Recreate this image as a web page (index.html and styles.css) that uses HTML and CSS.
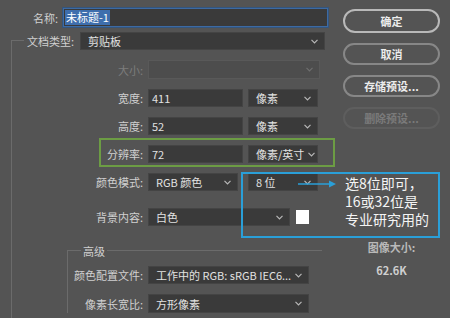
FILE: index.html
```html
<!DOCTYPE html>
<html lang="zh-CN">
<head>
    <meta charset="UTF-8">
    <meta name="viewport" content="width=device-width, initial-scale=1.0">
    <title>新建文档</title>
    <link rel="stylesheet" href="styles.css">
</head>
<body>
    <div class="dialog">
        <!-- left: form -->
        <div class="form">
            <div class="row row-name">
                <span class="lbl">名称:</span>
                <div class="field name-field"><span class="picked">未标题-1</span></div>
            </div>
            <div class="row row-type">
                <span class="lbl">文档类型:</span>
                <div class="select type-select">
                    <span>剪贴板</span>
                    <svg class="chev" width="7" height="5" viewBox="0 0 7 5"><polyline points="0.5,0.8 3.5,3.8 6.5,0.8"/></svg>
                </div>
            </div>

            <div class="frame">
                <div class="row row-size dim">
                    <span class="lbl">大小:</span>
                    <div class="select size-select">
                        <span></span>
                        <svg class="chev" width="7" height="5" viewBox="0 0 7 5"><polyline points="0.5,0.8 3.5,3.8 6.5,0.8"/></svg>
                    </div>
                </div>
                <div class="row">
                    <span class="lbl">宽度:</span>
                    <div class="field num-field">411</div>
                    <div class="select unit-select">
                        <span>像素</span>
                        <svg class="chev" width="7" height="5" viewBox="0 0 7 5"><polyline points="0.5,0.8 3.5,3.8 6.5,0.8"/></svg>
                    </div>
                </div>
                <div class="row">
                    <span class="lbl">高度:</span>
                    <div class="field num-field">52</div>
                    <div class="select unit-select">
                        <span>像素</span>
                        <svg class="chev" width="7" height="5" viewBox="0 0 7 5"><polyline points="0.5,0.8 3.5,3.8 6.5,0.8"/></svg>
                    </div>
                </div>
                <div class="row">
                    <span class="lbl">分辨率:</span>
                    <div class="field num-field">72</div>
                    <div class="select unit-select">
                        <span>像素/英寸</span>
                        <svg class="chev" width="7" height="5" viewBox="0 0 7 5"><polyline points="0.5,0.8 3.5,3.8 6.5,0.8"/></svg>
                    </div>
                </div>
                <div class="row">
                    <span class="lbl">颜色模式:</span>
                    <div class="select mode-select">
                        <span>RGB 颜色</span>
                        <svg class="chev" width="7" height="5" viewBox="0 0 7 5"><polyline points="0.5,0.8 3.5,3.8 6.5,0.8"/></svg>
                    </div>
                    <div class="select bit-select">
                        <span>8 位</span>
                        <svg class="chev" width="7" height="5" viewBox="0 0 7 5"><polyline points="0.5,0.8 3.5,3.8 6.5,0.8"/></svg>
                    </div>
                </div>
                <div class="row row-bg">
                    <span class="lbl">背景内容:</span>
                    <div class="select bg-select">
                        <span>白色</span>
                        <svg class="chev" width="7" height="5" viewBox="0 0 7 5"><polyline points="0.5,0.8 3.5,3.8 6.5,0.8"/></svg>
                    </div>
                    <div class="swatch"></div>
                </div>

                <div class="adv">
                    <div class="adv-head"><span>高级</span></div>
                    <div class="adv-body">
                        <div class="row row-profile">
                            <span class="lbl">颜色配置文件:</span>
                            <div class="select wide-select">
                                <span>工作中的 RGB: sRGB IEC6...</span>
                                <svg class="chev" width="7" height="5" viewBox="0 0 7 5"><polyline points="0.5,0.8 3.5,3.8 6.5,0.8"/></svg>
                            </div>
                        </div>
                        <div class="row">
                            <span class="lbl">像素长宽比:</span>
                            <div class="select wide-select">
                                <span>方形像素</span>
                                <svg class="chev" width="7" height="5" viewBox="0 0 7 5"><polyline points="0.5,0.8 3.5,3.8 6.5,0.8"/></svg>
                            </div>
                        </div>
                    </div>
                </div>
            </div>
        </div>

        <!-- right: buttons -->
        <div class="side">
            <div class="btn primary">确定</div>
            <div class="btn">取消</div>
            <div class="btn">存储预设...</div>
            <div class="btn disabled">删除预设...</div>
            <div class="img-size">图像大小:</div>
            <div class="img-val">62.6K</div>
        </div>
    </div>

    <!-- annotations drawn over the dialog -->
    <div class="mark-green"></div>
    <div class="mark-blue">
        <svg class="arrow" width="38" height="8" viewBox="0 0 38 8">
            <line x1="0" y1="4" x2="32" y2="4"/>
            <polygon points="31,0.5 38,4 31,7.5"/>
        </svg>
        <p class="note">选8位即可，<br>16或32位是<br>专业研究用的</p>
    </div>
</body>
</html>
```

FILE: styles.css
```css
/* Reset */
* {
    margin: 0;
    padding: 0;
    box-sizing: border-box;
}

body {
    width: 450px;
    height: 318px;
    overflow: hidden;
    background-color: #545454;
    color: #d2d2d2;
    font-family: "Noto Sans CJK SC", "Noto Sans", sans-serif;
    font-size: 11px;
    line-height: 14px;
}

.dialog {
    display: flex;
    height: 318px;
}

/* Form column */
.form {
    width: 335px;
    display: flex;
    flex-direction: column;
}

.row {
    display: flex;
    align-items: center;
    height: 18px;
    margin-top: 10px;
}

.lbl {
    text-align: right;
    white-space: nowrap;
    color: #d0d0d0;
}

.field,
.select {
    height: 100%;
    background-color: #3a3a3a;
    border: 1px solid #444;
    color: #e2e2e2;
    display: flex;
    align-items: center;
    white-space: nowrap;
}

.field {
    padding-left: 3px;
}

.select {
    padding: 0 6px 0 7px;
    justify-content: space-between;
}

.chev {
    flex-shrink: 0;
    margin-left: 4px;
}

.chev polyline {
    fill: none;
    stroke: #b8b8b8;
    stroke-width: 1.2;
}

/* Name */
.row-name {
    margin-top: 8px;
    height: 19px;
}

.row-name .lbl {
    width: 58px;
}

.name-field {
    width: 265px;
    margin-left: 5px;
    padding-left: 1px;
    border: 1px solid #3d6aa3;
    box-shadow: 0 0 0 1px #34557c;
}

.picked {
    background-color: #3e6ead;
    color: #fff;
    padding: 0 1px;
    line-height: 15px;
}

/* Document type, sits on the frame's top edge */
.row-type {
    margin-top: 5px;
}

.row-type::before {
    content: "";
    align-self: flex-end;
    width: 12px;
    height: 9px;
    margin-left: 11px;
    border-top: 1px solid #6b6b6b;
    border-left: 1px solid #6b6b6b;
}

.row-type .lbl {
    width: 50px;
}

.type-select {
    width: 245px;
    margin-left: 6px;
}

.frame {
    flex: 1;
    margin-left: 11px;
    border-left: 1px solid #6b6b6b;
}

.frame .lbl {
    width: 131px;
}

.frame .field,
.frame .select {
    margin-left: 5px;
}

.row-size {
    height: 19px;
}

.dim .lbl {
    color: #7c7c7c;
}

.dim .select {
    background-color: #4d4d4d;
    border-color: #595959;
}

.dim .chev polyline {
    stroke: #6e6e6e;
}

.size-select {
    width: 172px;
}

.num-field {
    width: 95px;
}

.unit-select {
    width: 70px;
}

.frame .mode-select {
    width: 90px;
}

.frame .bit-select {
    width: 70px;
    margin-left: 10px;
}

.row-bg {
    margin-top: 17px;
}

.bg-select {
    width: 142px;
}

.swatch {
    width: 13px;
    height: 14px;
    margin-left: 6px;
    background-color: #fff;
}

/* Advanced group */
.adv {
    flex: 1;
    margin-left: 55px;
    width: 255px;
    display: flex;
    flex-direction: column;
}

.adv-head {
    display: flex;
    align-items: center;
    height: 14px;
    margin-top: 18px;
}

.adv-head::before,
.adv-head::after {
    content: "";
    align-self: flex-end;
    height: 7px;
    border-top: 1px solid #6b6b6b;
}

.adv-head::before {
    width: 13px;
    border-left: 1px solid #6b6b6b;
}

.adv-head::after {
    flex: 1;
}

.adv-head span {
    padding: 0 2px;
    color: #d0d0d0;
}

.adv-body {
    flex: 1;
    border-left: 1px solid #6b6b6b;
}

.adv .lbl {
    width: 75px;
}

.row-profile {
    margin-top: 8px;
}

.wide-select {
    width: 161px;
}

.adv .row:last-child {
    height: 19px;
}

/* Button column */
.side {
    width: 97px;
    margin-left: 8px;
    padding-top: 9px;
    display: flex;
    flex-direction: column;
    align-items: stretch;
}

.btn {
    height: 22px;
    margin-bottom: 10px;
    border: 2px solid #878787;
    border-radius: 12px;
    display: flex;
    align-items: center;
    justify-content: center;
    color: #ececec;
    font-weight: bold;
}

.btn.primary {
    height: 24px;
    border-color: #b9b9b9;
}

.btn.disabled {
    border-color: #5e5e5e;
    color: #7a7a7a;
}

.img-size {
    margin-top: 101px;
    text-align: center;
    color: #b9b9b9;
    font-weight: bold;
}

.img-val {
    margin-top: 9px;
    text-align: center;
    color: #cfcfcf;
    font-weight: bold;
}

/* Annotations */
.mark-green {
    position: absolute;
    left: 99px;
    top: 138px;
    width: 236px;
    height: 29px;
    border: 2px solid #6c9c44;
}

.mark-blue {
    position: absolute;
    left: 241px;
    top: 172px;
    width: 199px;
    height: 66px;
    border: 2px solid #2a9fd8;
    display: flex;
    align-items: flex-start;
    padding-left: 55px;
}

.arrow {
    margin-top: 6px;
    flex-shrink: 0;
}

.arrow line {
    stroke: #2a9fd8;
    stroke-width: 1.5;
}

.arrow polygon {
    fill: #2a9fd8;
}

.note {
    margin-left: 9px;
    font-size: 14px;
    line-height: 18px;
    color: #f4f4f4;
}
```
